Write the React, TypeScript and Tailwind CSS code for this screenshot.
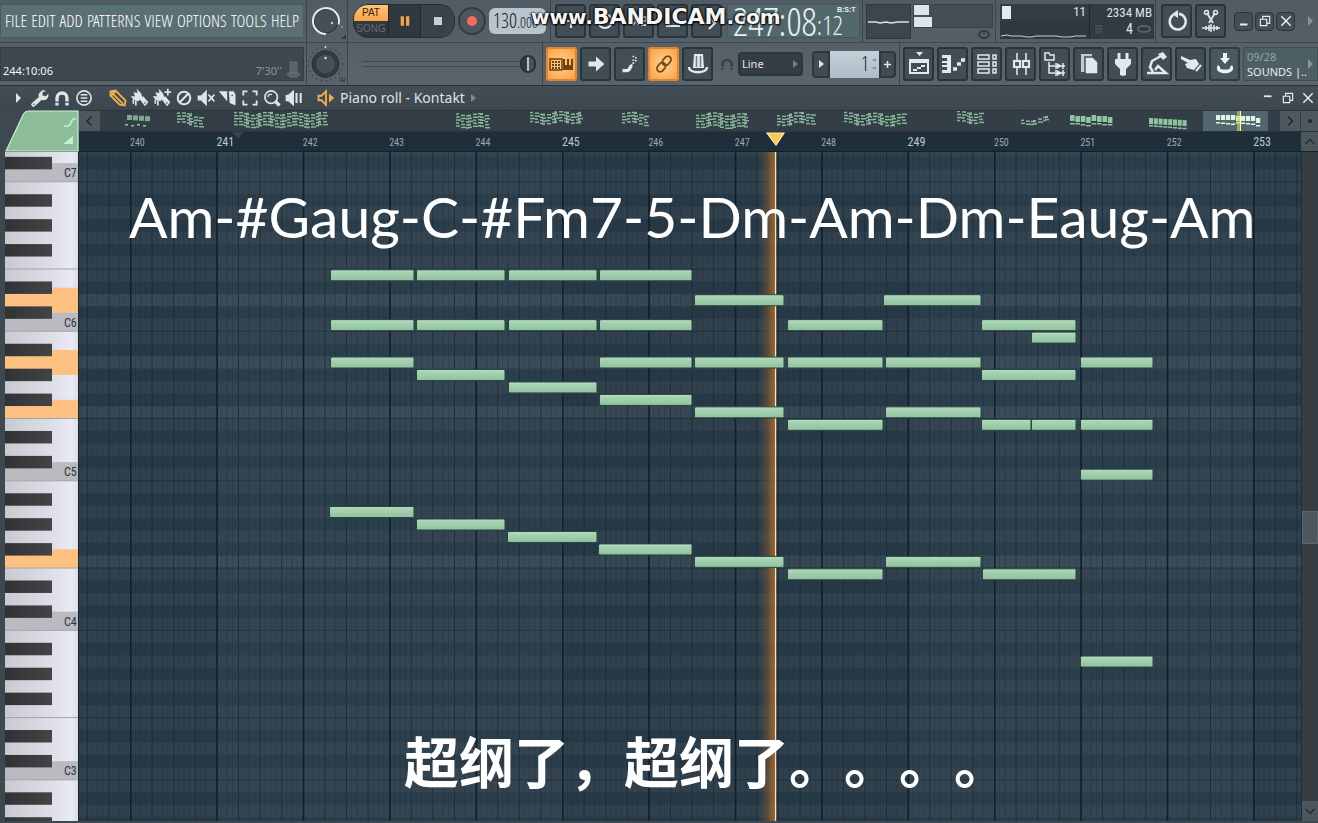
import type { ReactNode } from "react";

const ROW = 12.46;
const BAR = 86.4;
const BAR_START = 51;
const C6_BOTTOM = 179.3;

/* semitones are counted from C6 */
const rowTop = (semi: number) => C6_BOTTOM - (semi + 1) * ROW;
const pitchClass = (semi: number) => ((semi % 12) + 12) % 12;
const isBlack = (semi: number) => [1, 3, 6, 8, 10].includes(pitchClass(semi));

const SEMIS = Array.from({ length: 56 }, (_, i) => 14 - i);
const PLAYING = [2, -3, -7, -19];

// [x, width, semitone]
const NOTES: [number, number, number][] = [
  [252, 83, 4], [338, 88, 4], [430, 88, 4], [521, 92, 4],
  [616, 89, 2], [805, 97, 2],
  [252, 83, 0], [338, 88, 0], [430, 88, 0], [521, 92, 0], [709, 95, 0], [903, 94, 0],
  [953, 44, -1],
  [252, 83, -3], [521, 92, -3], [616, 89, -3], [709, 95, -3], [807, 95, -3], [1002, 72, -3],
  [338, 88, -4], [903, 94, -4],
  [430, 88, -5],
  [521, 92, -6],
  [616, 89, -7], [807, 95, -7],
  [709, 95, -8], [903, 49, -8], [953, 44, -8], [1002, 72, -8],
  [1002, 72, -12],
  [251, 84, -15], [338, 88, -16], [429, 89, -17], [520, 93, -18],
  [616, 89, -19], [807, 95, -19], [709, 95, -20], [904, 93, -20],
  [1002, 72, -27],
];

const BARS = Array.from({ length: 15 }, (_, i) => ({
  bar: 239 + i,
  x: BAR_START + (i - 1) * BAR,
}));

function Icon({ size = 24, children }: { size?: number; children: ReactNode }) {
  return (
    <svg
      width={size}
      height={size}
      viewBox="0 0 24 24"
      fill="none"
      stroke="currentColor"
      strokeWidth="2"
      aria-hidden="true"
      className="shrink-0"
    >
      {children}
    </svg>
  );
}

function ToolButton({
  label,
  active,
  teal,
  children,
}: {
  label: string;
  active?: boolean;
  teal?: boolean;
  children: ReactNode;
}) {
  const look = active
    ? "border-[#e8832c] bg-[radial-gradient(#ffd291,#f9a145)] text-[#70430b]"
    : teal
      ? "border-[#303b42] bg-[#48595f] text-[#eef3f4]"
      : "border-[#2c343b] bg-[#434d55] text-[#e3e8ea]";
  return (
    <button
      aria-label={label}
      className={`flex h-[34px] w-[31px] shrink-0 items-center justify-center rounded-[3px] border-2 ${look}`}
    >
      {children}
    </button>
  );
}

function Section({ className, children }: { className: string; children?: ReactNode }) {
  return (
    <div
      className={`flex h-full shrink-0 items-center border-r border-[#3b444c] ${className}`}
    >
      {children}
    </div>
  );
}

function Knob({ ring }: { ring?: boolean }) {
  return (
    <svg width="40" height="40" viewBox="0 0 40 40" fill="none" aria-hidden="true">
      {ring ? (
        <>
          <circle cx="19" cy="20" r="12" fill="#454f58" stroke="#2b3339" />
          <path d="M19 33A13 13 0 1 1 31.500 23.500" stroke="#e6eaec" strokeWidth="2" />
          <circle cx="25" cy="22" r="1.200" fill="#c4cbd0" />
          <circle cx="35" cy="26" r="1" fill="#9aa3a9" />
          <path d="M39 33v5h-5z" fill="#333c43" />
        </>
      ) : (
        <>
          <circle cx="18.500" cy="20" r="17" stroke="#3b444b" strokeWidth="1.500" strokeDasharray="1.500 3.500" />
          <circle cx="18.500" cy="20" r="13.500" fill="#343c43" stroke="#2a3238" />
          <circle cx="18.500" cy="20" r="10" fill="#454f58" stroke="#2e363d" />
          <circle cx="18.500" cy="14" r="1.200" fill="#dfe4e6" />
          <circle cx="18.500" cy="3" r="1" fill="#dfe4e6" />
          <path d="M33 33v4h5v-4M35.500 33v4" stroke="#343d44" />
        </>
      )}
    </svg>
  );
}

function WindowButtons({ small }: { small?: boolean }) {
  const box = small
    ? "flex h-[19px] w-[19px] items-center justify-center rounded-sm border border-[#2c343b] bg-[#434d55]"
    : "flex h-5 w-5 items-center justify-center";
  return (
    <div className={`flex text-[#e8ecee] ${small ? "gap-[2px]" : ""}`}>
      <button aria-label="Minimize" className={box}>
        <Icon size={14}>
          {small ? <path d="M5 18h13" strokeWidth="3.500" /> : <path d="M5 9h13" strokeWidth="3" />}
        </Icon>
      </button>
      <button aria-label="Restore" className={box}>
        <Icon size={14}>
          <path d="M4 9h11v11H4zM8 8V4h12v12h-4" />
        </Icon>
      </button>
      <button aria-label="Close" className={box}>
        <Icon size={14}>
          <path d="M4 4l16 16M20 4L4 20" strokeWidth="2.500" />
        </Icon>
      </button>
    </div>
  );
}

function Transport() {
  return (
    <div className="flex h-[34px] w-[102px] shrink-0 overflow-hidden rounded-[15px] border border-[#262e34] bg-[#2f383f]">
      <div className="flex w-[34px] flex-col font-['Liberation_Sans',sans-serif] text-[10px] leading-4">
        <button className="h-4 bg-[linear-gradient(#ffc377,#f9a44a)] text-[#33230f]">PAT</button>
        <button className="h-4 text-[#626b72]">SONG</button>
      </div>
      <button aria-label="Pause" className="flex w-[33px] items-center justify-center border-x border-[#1f262b] text-[#f5a04b]">
        <Icon size={16}>
          <path d="M8 5v14M16 5v14" strokeWidth="5" />
        </Icon>
      </button>
      <button aria-label="Stop" className="flex w-[33px] items-center justify-center bg-[#39434a] text-[#c9d0d4]">
        <Icon size={16}>
          <rect x="6" y="6" width="12" height="12" fill="currentColor" stroke="none" />
        </Icon>
      </button>
    </div>
  );
}

function TopRow() {
  return (
    <div className="flex h-[43px] items-center border-b border-[#3e474f]">
      <Section className="w-[307px]">
        <nav className="flex h-[34px] w-[304px] items-center justify-between border border-[#475a5e] bg-[#5b7075] px-1 font-['Open_Sans_Condensed_Light','Roboto_Condensed',sans-serif] text-[17px] text-white">
          {["FILE", "EDIT", "ADD", "PATTERNS", "VIEW", "OPTIONS", "TOOLS", "HELP"].map((item) => (
            <a key={item} href="#">
              {item}
            </a>
          ))}
        </nav>
      </Section>
      <Section className="w-[41px]">
        <Knob ring />
      </Section>
      <Section className="w-[203px] gap-[3px] pl-[5px]">
        <Transport />
        <button aria-label="Record" className="flex h-7 w-7 shrink-0 items-center justify-center rounded-full border-2 border-[#323b42] bg-[#4b555d]">
          <span className="h-[10px] w-[10px] rounded-full bg-[#f9695a]" />
        </button>
        <div className="h-[26px] w-[57px] shrink-0 rounded-md bg-[#b9c5cd] pl-1 font-['Open_Sans_Condensed_Light','Roboto_Condensed',sans-serif] text-[20px] leading-[26px] text-[#16202a]">
          130<span className="text-[15px]">.000</span>
        </div>
      </Section>
      <Section className="w-[312px] gap-[3px] pl-1">
        <ToolButton label="Metronome">
          <Icon>
            <path d="M12 5v14M8 12h8" />
          </Icon>
        </ToolButton>
        <ToolButton label="Wait for input">
          <Icon>
            <circle cx="12" cy="12" r="7" />
            <path d="M12 7v5l3 2" />
          </Icon>
        </ToolButton>
        <ToolButton label="Countdown">
          <Icon>
            <path d="M6 8l6 8M12 8l-6 8M15 8h4v4h-4v4h4" />
          </Icon>
        </ToolButton>
        <ToolButton label="Overdub">
          <Icon>
            <path d="M5 17h14M8 7v10" />
          </Icon>
        </ToolButton>
        <ToolButton label="Loop record">
          <Icon>
            <path d="M4 14h12M14 8l6 6-6 6" />
          </Icon>
        </ToolButton>
        <div className="ml-[2px] flex h-[34px] w-[133px] shrink-0 items-center border border-[#46585c] bg-[#53686c] pl-[5px] font-['Open_Sans_Condensed_Light','Roboto_Condensed',sans-serif] leading-none text-[#e4f1ef]">
          <span className="text-[38px]">247:08</span>
          <span className="pt-2 text-[26px]">:12</span>
          <span className="mt-[1px] -ml-[6px] self-start font-['Liberation_Sans',sans-serif] text-[7px] font-bold">B:S:T</span>
        </div>
      </Section>
      <Section className="w-[133px] gap-[2px] pl-[3px]">
        <svg width="45" height="35" className="shrink-0 border border-[#2f383f] bg-[#3c464e]" aria-hidden="true">
          <path d="M1 17h8l4 1 6-1 5 1 7-1h11" fill="none" stroke="#dde3e6" strokeWidth="1.500" />
        </svg>
        <div className="h-[35px] w-[80px] shrink-0">
          <div className="flex h-6 flex-col gap-[2px] border border-[#39424a] bg-[#444d55]">
            <span className="h-[10px] w-[15px] shrink-0 bg-[#e0e5e7]" />
            <span className="h-[10px] w-[18px] shrink-0 bg-[#e0e5e7]" />
          </div>
          <svg width="12" height="9" viewBox="0 0 12 9" className="mt-[2px] mr-[3px] ml-auto" aria-hidden="true">
            <ellipse cx="6" cy="4.500" rx="5" ry="3.500" fill="none" stroke="#343c43" strokeWidth="2" />
            <path d="M6 2v3" stroke="#343c43" />
          </svg>
        </div>
      </Section>
      <Section className="w-[160px] pl-[4px] font-['Roboto_Condensed',sans-serif] text-[13px] text-[#dfe5e8]">
        <div className="flex h-[35px] w-[89px] flex-col bg-[#2f383f]">
          <div className="flex h-[17px] items-center justify-between bg-[#343d44] pr-[3px] pl-[2px]">
            <span className="h-[13px] w-[9px] bg-[#e5e9ea]" />
            <span>11</span>
          </div>
          <svg width="89" height="18" aria-hidden="true">
            <path d="M1 15l6-1 4 1h10l6 1h5l4-1h20l6 1h8l5-1h11" fill="none" stroke="#c9d0d3" />
          </svg>
        </div>
        <div className="flex h-[35px] w-[65px] flex-col items-end border-l border-[#20272c] bg-[#323b42] pr-[2px] leading-[17px]">
          <span>2334 MB</span>
          <span className="flex w-full items-center justify-between pl-1 text-[14px]">
            <svg width="9" height="10" aria-hidden="true">
              <path d="M1 2h7M1 5h7M1 8h7" stroke="#59636a" />
            </svg>
            <span className="flex items-center gap-1 pl-5">
              4
              <svg width="15" height="9" aria-hidden="true">
                <ellipse cx="7" cy="4" rx="6" ry="3" fill="none" stroke="#59636a" strokeWidth="2" />
              </svg>
            </span>
          </span>
        </div>
      </Section>
      <div className="flex min-w-0 flex-1 items-center pl-[5px]">
        <div className="flex gap-[3px]">
          <ToolButton label="Undo">
            <Icon>
              <path d="M8.500 5.800A8 8 0 1 0 14 4.700" strokeWidth="2.500" />
              <path d="M13 1v8L7 5z" fill="currentColor" stroke="none" />
            </Icon>
          </ToolButton>
          <ToolButton label="Cut">
            <Icon>
              <path d="M8 4l6 10M16 4l-6 10" strokeWidth="1.800" />
              <circle cx="7.500" cy="3.500" r="2" strokeWidth="1.500" />
              <circle cx="16.500" cy="3.500" r="2" strokeWidth="1.500" />
              <path d="M3 19h18M7 17v4M10 16v6M12 15v8M15 16v6M18 17v4" strokeWidth="1.500" />
            </Icon>
          </ToolButton>
        </div>
        <div className="ml-2">
          <WindowButtons small />
        </div>
        <svg width="7" height="10" className="mr-1 ml-auto" aria-hidden="true">
          <path d="M1 0l5 5-5 5z" fill="#87919a" />
        </svg>
      </div>
    </div>
  );
}

function SecondRow() {
  return (
    <div className="flex h-[42px] items-center">
      <Section className="w-[307px]">
        <div className="flex h-[34px] w-[304px] items-end border border-[#353e45] bg-[#3e474f] px-[2px] pb-px font-['Noto_Sans',sans-serif] text-[11px] leading-4 text-[#f0f3f4]">
          <span>244:10:06</span>
          <span className="ml-auto text-[#89939a]">7'30''</span>
          <svg width="15" height="18" viewBox="0 0 15 18" className="ml-1 shrink-0" aria-hidden="true">
            <path d="M4 1h7v11H4zM1 13l3 3h7l3-3-2-1H3z" fill="#59636a" stroke="#646e75" />
          </svg>
        </div>
      </Section>
      <Section className="w-[41px]">
        <Knob />
      </Section>
      <Section className="w-[195px] px-[6px]">
        <input
          type="range"
          aria-label="Song position"
          defaultValue={100}
          className="ml-2 h-5 w-full appearance-none bg-[linear-gradient(transparent_7px,#3f4850_7px,#3f4850_8px,#59646d_8px,#59646d_12px,#3f4850_12px,#3f4850_13px,transparent_13px)] [&::-webkit-slider-thumb]:h-[18px] [&::-webkit-slider-thumb]:w-4 [&::-webkit-slider-thumb]:appearance-none [&::-webkit-slider-thumb]:rounded-full [&::-webkit-slider-thumb]:border-2 [&::-webkit-slider-thumb]:border-[#2b3238] [&::-webkit-slider-thumb]:bg-[linear-gradient(90deg,#343c43_42%,#c9beb0_42%,#c9beb0_58%,#4a535b_58%)]"
        />
      </Section>
      <Section className="w-[357px] gap-[3px] pl-[3px]">
        <ToolButton label="Typing keyboard to piano" active>
          <svg width="25" height="14" viewBox="0 0 25 14" className="shrink-0" aria-hidden="true">
            <path d="M1 2h12v11H1z" fill="none" stroke="currentColor" strokeWidth="1.500" />
            <path d="M3 5h9M3 8h9M3 11h9" stroke="currentColor" strokeWidth="2" strokeDasharray="2 1" />
            <path d="M14 2h2v6h2V2h2v6h2V2h2v11H14z" fill="currentColor" />
          </svg>
        </ToolButton>
        <ToolButton label="Step edit">
          <Icon size={20}>
            <path d="M3 9h9V3l10 9-10 9v-6H3z" fill="currentColor" stroke="none" />
          </Icon>
        </ToolButton>
        <ToolButton label="Note slide">
          <Icon size={20}>
            <path d="M3 20h5c5 0 3-6 7-6" strokeWidth="4" />
            <path d="M16 12V6M19 9V3M16 4V2" strokeDasharray="2 1.500" />
          </Icon>
        </ToolButton>
        <ToolButton label="Multilink" active>
          <Icon size={20}>
            <g transform="rotate(-50 12 12)">
              <rect x="1" y="8" width="12" height="8" rx="4" />
              <rect x="11" y="8" width="12" height="8" rx="4" />
            </g>
          </Icon>
        </ToolButton>
        <ToolButton label="Magic hat">
          <Icon>
            <path d="M8 2h9l1 14H7z" fill="currentColor" stroke="none" />
            <path d="M10.500 4v11M14.500 4v11" stroke="#717c96" strokeWidth="1.500" />
            <path d="M3 15c0 7 18 7 18 0" strokeWidth="2.500" />
          </Icon>
        </ToolButton>
        <span className="ml-[3px] text-[#38424a]">
          <Icon size={16}>
            <path d="M5 21v-8a7 7 0 0 1 14 0v8" strokeWidth="4" />
            <path d="M3 17h5M16 17h5" stroke="#56616a" />
          </Icon>
        </span>
        <label className="relative flex shrink-0 items-center">
          <span className="sr-only">Snap</span>
          <select className="h-[24px] w-[65px] appearance-none rounded-sm border-2 border-[#2e363d] bg-[#353d43] pl-[2px] font-['Noto_Sans',sans-serif] text-[11px] text-[#e3e7ea]">
            <option>Line</option>
          </select>
          <svg width="5" height="8" className="absolute right-[5px]" aria-hidden="true">
            <path d="M0 0l5 4-5 4z" fill="#727c84" />
          </svg>
        </label>
        <div className="ml-[6px] flex h-[27px] shrink-0 items-stretch">
          <button aria-label="Pattern menu" className="flex w-[18px] items-center justify-center rounded-l-sm border-2 border-[#2f373e] bg-[#414b52]">
            <svg width="5" height="8" aria-hidden="true">
              <path d="M0 0l5 4-5 4z" fill="#dfe4e7" />
            </svg>
          </button>
          <div className="flex w-[49px] items-center justify-end gap-[3px] bg-[linear-gradient(#c4d1d9,#aebcc5)] pr-[2px] font-['Open_Sans_Condensed_Light','Roboto_Condensed',sans-serif] text-[20px] leading-6 text-[#16202a]">
            1
            <svg width="5" height="14" aria-hidden="true">
              <path d="M0 4l2.500-3L5 4zM0 10l2.500 3L5 10z" fill="#87949d" />
            </svg>
          </div>
          <button aria-label="Add pattern" className="flex w-[17px] items-center justify-center rounded-r-sm border-2 border-[#2f373e] bg-[#414b52] text-[#e3e8ea]">
            <svg width="9" height="9" aria-hidden="true">
              <path d="M4.500 1v7M1 4.500h7" stroke="currentColor" strokeWidth="1.500" />
            </svg>
          </button>
        </div>
      </Section>
      <div className="flex min-w-0 flex-1 items-center gap-[3px] pl-[3px]">
        <ToolButton label="Playlist">
          <Icon>
            <path d="M9 0h7l-3.500 4z" fill="currentColor" stroke="none" />
            <path d="M3 8h18v13H3z" />
            <path d="M3 8h18v3H3z" fill="currentColor" stroke="none" />
            <path d="M6 18h4M10 16h4M14 14h4" />
          </Icon>
        </ToolButton>
        <ToolButton label="Piano roll">
          <Icon>
            <path d="M1 3h9v18H1v-3h5v-3H1v-2h5v-2H1V9h5V6H1z" fill="currentColor" stroke="none" />
            <path d="M12 17h4M16 12h4M20 8h4" strokeWidth="3.500" />
          </Icon>
        </ToolButton>
        <ToolButton label="Channel rack">
          <Icon>
            <path d="M3 3h11v4H3zM3 10h11v4H3zM3 17h11v4H3zM18 3h3v4h-3zM18 10h3v4h-3zM18 17h3v4h-3z" strokeWidth="1.500" />
          </Icon>
        </ToolButton>
        <ToolButton label="Mixer">
          <Icon>
            <path d="M8 1v8M8 15v8M17 1v8M17 15v8" strokeWidth="1.500" />
            <rect x="5" y="9" width="6" height="6" strokeWidth="2.200" />
            <rect x="14" y="9" width="6" height="6" strokeWidth="2.200" />
          </Icon>
        </ToolButton>
        <ToolButton label="Browser">
          <Icon>
            <path d="M2 1h4l1 2h4v5H2zM6 10v11h6M6 14h6" strokeWidth="1.500" />
            <path d="M13 11v6M13 18v6M13 14h9M13 21h9M20 11v6M20 18v6" strokeWidth="1.500" />
            <path d="M14 11l5 3-5 3zM14 18l5 3-5 3z" fill="currentColor" stroke="none" />
          </Icon>
        </ToolButton>
        <ToolButton label="Project files">
          <Icon>
            <path d="M4 2h11v18H4z" fill="currentColor" stroke="none" opacity=".8" />
            <path d="M8 5h8l5 5v12H8z" fill="currentColor" stroke="#434d55" strokeWidth="1.500" />
          </Icon>
        </ToolButton>
        <ToolButton label="Plugins">
          <Icon>
            <path d="M8 1v6M16 1v6" strokeWidth="3" />
            <path d="M4 7h16v5l-5 5v6l-3 1-3-1v-6l-5-5z" fill="currentColor" stroke="none" />
          </Icon>
        </ToolButton>
        <ToolButton label="Tempo tapper">
          <Icon>
            <path d="M13 2l5-2 4 5-4 3z" fill="currentColor" stroke="none" />
            <path d="M16 4L7 9l-2 6 3 5" strokeWidth="2.500" />
            <path d="M2 21h19l-8-7-3 4" strokeWidth="2.500" />
          </Icon>
        </ToolButton>
        <ToolButton label="Touch controller">
          <Icon>
            <path d="M2 4l9 4 6-1 3 5-5 6-7-2-2-4 3-1-7-4z" fill="currentColor" stroke="none" />
            <path d="M17 19l5-6" />
          </Icon>
        </ToolButton>
        <ToolButton label="Download" teal>
          <Icon>
            <path d="M12 1v6" strokeWidth="4" />
            <path d="M7 6h10l-5 6z" fill="currentColor" stroke="none" />
            <path d="M5 13c-7 11 21 11 14 0l-4 4H9z" fill="currentColor" stroke="none" />
            <ellipse cx="12" cy="16" rx="5" ry="1.500" fill="#48595f" stroke="none" />
          </Icon>
        </ToolButton>
        <div className="flex h-[34px] min-w-0 flex-1 items-center justify-between border border-[#3f5054] bg-[#4d5f64] pr-1 pl-[3px] font-['Noto_Sans',sans-serif] text-[11px] leading-[15px]">
          <div className="whitespace-nowrap">
            <div className="text-[#93a4a9]">09/28</div>
            <div className="text-[#e5edee]">SOUNDS |..</div>
          </div>
          <svg width="5" height="10" className="shrink-0" aria-hidden="true">
            <path d="M0 0l5 5-5 5z" fill="#87959b" />
          </svg>
        </div>
      </div>
    </div>
  );
}

function PianoRollTitle() {
  return (
    <div className="flex h-6 items-center bg-[linear-gradient(#444e57,#3c464f)] pl-4 text-[#dfe4e6]">
      <svg width="6" height="10" aria-hidden="true">
        <path d="M0 0l5 5-5 5z" fill="currentColor" />
      </svg>
      <div className="ml-2 flex gap-[2px]">
        <button aria-label="Tools">
          <Icon size={20}>
            <path d="M4 20l9-8" strokeWidth="5" strokeLinecap="round" />
            <path d="M19 4l-4 1v4l4 1 3-3c1 6-4 9-8 7s-5-6-2-9 5-3 7-1z" fill="currentColor" stroke="none" />
            <circle cx="4.500" cy="19.500" r="1" fill="#414b54" stroke="none" />
          </Icon>
        </button>
        <button aria-label="Snap to grid">
          <Icon size={20}>
            <path d="M6 21v-9a6 6 0 0 1 12 0v9" strokeWidth="4" />
            <path d="M3 17h6M15 17h6" stroke="#414b54" strokeWidth="1.500" />
          </Icon>
        </button>
        <button aria-label="Stamp">
          <Icon size={20}>
            <circle cx="12" cy="12" r="8.500" />
            <path d="M8 8h8M8 12h8M8 16h8" strokeWidth="1.800" />
          </Icon>
        </button>
      </div>
      <div className="ml-[14px] flex gap-[2px]">
        <button aria-label="Draw" className="text-[#f3ac4a]">
          <Icon size={20}>
            <path d="M3 4l6-1 12 12-1 6-6-1L3 9zM4 5l14 14M9 4L4 9" strokeWidth="2.200" />
          </Icon>
        </button>
        <button aria-label="Paint">
          <Icon size={20}>
            <path d="M8 1l5 5 2 5-5 5-6-2-3-4 5 0-2-5 5 1zM12 14l4-4 6 7-4 5z" fill="currentColor" stroke="none" />
            <path d="M4 14v5M7 15v6" />
            <circle cx="18" cy="18" r="1" fill="#414b54" stroke="none" />
          </Icon>
        </button>
        <button aria-label="Paint drum sequence">
          <Icon size={20}>
            <path d="M8 1l5 5 2 5-5 5-6-2-3-4 5 0-2-5 5 1zM12 14l4-4 6 7-4 5z" fill="currentColor" stroke="none" />
            <path d="M4 14v5M7 15v6M19 1v8M15 5h8" />
            <circle cx="18" cy="18" r="1" fill="#414b54" stroke="none" />
          </Icon>
        </button>
        <button aria-label="Delete">
          <Icon size={20}>
            <circle cx="12" cy="12" r="7.500" strokeWidth="2.500" />
            <path d="M7 17L17 7" strokeWidth="2.500" />
          </Icon>
        </button>
        <button aria-label="Mute">
          <Icon size={20}>
            <path d="M2 9h4l7-7v20l-7-7H2z" fill="currentColor" stroke="none" />
            <path d="M15 8l7 8M22 8l-7 8" />
          </Icon>
        </button>
        <button aria-label="Slice">
          <Icon size={20}>
            <path d="M1 4h10v12zM13 4h6l2 4v13l-7-3z" fill="currentColor" stroke="none" />
            <circle cx="17" cy="9" r="1" fill="#414b54" stroke="none" />
          </Icon>
        </button>
        <button aria-label="Select">
          <Icon size={20}>
            <path d="M4 9V4h5M15 4h5v5M20 15v5h-5M9 20H4v-5" strokeWidth="2.200" />
          </Icon>
        </button>
        <button aria-label="Zoom">
          <Icon size={20}>
            <circle cx="11" cy="11" r="7.500" />
            <path d="M7 11c0-3 3-4 5-3" strokeWidth="1.500" />
            <path d="M16 16l5 5" strokeWidth="4" />
          </Icon>
        </button>
        <button aria-label="Playback">
          <Icon size={20}>
            <path d="M2 8h3l7-6v20l-7-6H2z" fill="currentColor" stroke="none" />
            <path d="M15 6v12M20 6v12" strokeWidth="2.500" />
          </Icon>
        </button>
      </div>
      <span className="ml-[13px] text-[#f3ac4a]">
        <Icon size={18}>
          <path d="M2 9h4l6-6v18l-6-6H2z" strokeWidth="2.500" />
          <path d="M16 6l7 6-7 6z" fill="currentColor" stroke="none" />
        </Icon>
      </span>
      <h1 className="ml-[5px] font-['Noto_Sans',sans-serif] text-[14px] leading-5">Piano roll - Kontakt</h1>
      <svg width="5" height="8" className="ml-[6px]" aria-hidden="true">
        <path d="M0 0l5 4-5 4z" fill="#7b858c" />
      </svg>
      <div className="ml-auto">
        <WindowButtons />
      </div>
    </div>
  );
}

// [x, width, y, rows, slope]
const CLUSTERS: [number, number, number, number, number][] = [
  [98, 24, 3, 4, 0.8],
  [155, 92, 3, 5, 0],
  [377, 34, 3, 5, 0.4],
  [451, 52, 3, 4, -0.2],
  [543, 24, 2, 4, 0.8],
  [617, 52, 3, 5, 0.2],
  [698, 38, 4, 4, -0.3],
  [765, 62, 3, 4, 0.2],
  [878, 27, 2, 4, 0],
  [942, 28, 10, 2, -0.8],
];

function MiniNotes() {
  return (
    <svg width="100%" height="20" className="block" aria-hidden="true">
      <g stroke="#8fc4a0" strokeWidth="1.500" opacity=".9">
        {CLUSTERS.map(([x, w, y, rows, slope]) =>
          Array.from({ length: Math.floor(w / 4) }, (_, c) =>
            Array.from({ length: rows }, (_, r) => {
              const nx = x + c * 4 + ((r * 3 + c) % 3);
              const ny = y + r * 3 + slope * c * 0.6 + Math.sin(c * 0.9 + x) * 1.5;
              return <path key={`${x}-${c}-${r}`} d={`M${nx} ${ny}h${3 + ((c + r) % 3)}`} />;
            }),
          ),
        )}
      </g>
      <g fill="#8fc4a0">
        {[0, 1, 2, 3].map((i) => (
          <g key={i}>
            <rect x={48 + i * 6} y={4 + i * 0.4} width="5" height="5" opacity=".8" />
            <rect x={46 + i * 6} y={13 + (i % 2)} width="3" height="1.500" />
          </g>
        ))}
        {[0, 1, 2, 3, 4, 5, 6, 7].map((i) => (
          <g key={i}>
            <rect x={991 + i * 5.4} y={[4, 5, 5, 6, 4, 5, 5, 6][i]} width="4.600" height="6" />
            <rect x={991 + i * 5.4} y={[12, 12, 13, 14, 12, 12, 13, 13][i]} width="4.600" height="1.500" />
            <rect x={1070 + i * 4.8} y={7 + i * 0.3} width="4" height="6" />
            <rect x={1070 + i * 4.8} y={14 + i * 0.4} width="4" height="1.500" />
          </g>
        ))}
      </g>
      <rect x="1124" width="65" height="20" fill="#53666e" />
      <g fill="#dff3e6">
        {[0, 1, 2, 3, 4, 5, 6, 7, 8].map((i) => (
          <g key={i}>
            <rect x={1137 + i * 5} y={4 + (i > 3 ? 1 : 0) + (i > 7 ? 2 : 0)} width="4.200" height="5" />
            <rect x={1137 + i * 5} y={11 + (i % 4) * 0.5 + (i > 7 ? 3 : 0)} width="4.200" height="1.500" />
          </g>
        ))}
      </g>
      <rect x="1158" width="4" height="20" fill="#c3d84a" opacity=".6" />
      <rect x="1161" width="1" height="20" fill="#f6ff9a" />
    </svg>
  );
}

function Overview() {
  return (
    <div className="flex h-[22px] border-y border-[#2b343b] bg-[#343e46] text-[#1f272d]">
      <div className="relative min-w-0 flex-1">
        <MiniNotes />
        <button aria-label="Scroll left" className="absolute top-0 left-0 flex h-5 w-[21px] items-center justify-center bg-[#4e5860]">
          <Icon size={12}>
            <path d="M15 3l-9 9 9 9" strokeWidth="3" />
          </Icon>
        </button>
      </div>
      <button aria-label="Scroll right" className="flex w-5 items-center justify-center bg-[#4e5860]">
        <Icon size={12}>
          <path d="M8 3l9 9-9 9" strokeWidth="3" />
        </Icon>
      </button>
      <button aria-label="Zoom" className="ml-px flex w-[17px] items-center justify-center bg-[#4e5860]">
        <span className="h-1 w-1 rounded-full bg-[#1f272d]" />
      </button>
    </div>
  );
}

function Ruler() {
  return (
    <div className="flex h-5 border-b border-[#15222b] bg-[#1f2f3a]">
      <svg height="19" className="min-w-0 flex-1 font-['Roboto_Condensed',sans-serif]">
        <path d="M153 0h12l-6 7z" fill="#34434d" />
        {BARS.slice(1).map(({ bar, x }) => (
          <text key={bar} x={x} y="14" fontSize={bar % 4 === 1 ? 12 : 10} fill={bar % 4 === 1 ? "#bcc6cb" : "#9ba7af"}>
            {bar}
          </text>
        ))}
        <path d="M688 1h17l-8 12z" fill="#ffc64b" stroke="#fff1bd" strokeWidth="1.200" />
      </svg>
      <button aria-label="Scroll up" className="flex w-[17px] items-center justify-center bg-[#4c565d] text-[#242d33]">
        <Icon size={12}>
          <path d="M3 16l9-9 9 9" strokeWidth="3" />
        </Icon>
      </button>
    </div>
  );
}

function Keyboard() {
  return (
    <svg width="74" height="100%" className="block bg-[#dcdce6]" aria-hidden="true">
      <defs>
        <linearGradient id="white-key" x1="0" x2="1">
          <stop offset="0" stopColor="#c9cad1" />
          <stop offset=".6" stopColor="#dcdde6" />
          <stop offset=".9" stopColor="#e9eaf5" />
          <stop offset="1" stopColor="#d9dae2" />
        </linearGradient>
        <linearGradient id="black-key" x1="0" x2="1">
          <stop offset="0" stopColor="#303234" />
          <stop offset="1" stopColor="#424446" />
        </linearGradient>
      </defs>
      <rect width="74" height="100%" fill="url(#white-key)" />
      {SEMIS.filter((s) => !isBlack(s)).map((s) => {
        const fill = PLAYING.includes(s) ? "#fcc180" : pitchClass(s) === 0 ? "#b9bbc0" : null;
        const above = isBlack(s + 1) ? ROW / 2 : 0;
        const below = isBlack(s - 1) ? ROW / 2 : 0;
        return (
          <g key={s}>
            {fill && <rect y={rowTop(s) - above} width="73" height={ROW + above + below} fill={fill} />}
            {!below && <path d={`M0 ${rowTop(s) + ROW}h73`} stroke="#a3a5ab" />}
            {pitchClass(s) === 0 && (
              <text x="59" y={rowTop(s) + 8} fontSize="12" fill="#33363a" className="font-['Roboto_Condensed',sans-serif]">
                {`C${6 + s / 12}`}
              </text>
            )}
          </g>
        );
      })}
      {SEMIS.filter(isBlack).map((s) => (
        <rect key={s} y={rowTop(s)} width="47" height={ROW} fill="url(#black-key)" />
      ))}
      <path d="M73.500 0v2000" stroke="#1a242b" />
    </svg>
  );
}

function NoteGrid() {
  return (
    <svg width="100%" height="100%" className="block" aria-hidden="true">
      <defs>
        <linearGradient id="note" x1="0" x2="0" y1="0" y2="1">
          <stop offset="0" stopColor="#b8e0c2" />
          <stop offset=".25" stopColor="#a6d3b2" />
          <stop offset="1" stopColor="#92c1a0" />
        </linearGradient>
        <linearGradient id="playhead" x1="0" x2="1">
          <stop offset="0" stopColor="#a5672a" stopOpacity="0" />
          <stop offset=".5" stopColor="#a5672a" stopOpacity=".35" />
          <stop offset="1" stopColor="#a86d30" stopOpacity=".9" />
        </linearGradient>
        <pattern id="steps" x={BAR_START} width={BAR / 4} height="8" patternUnits="userSpaceOnUse">
          <path d="M5.400 0v8M16.200 0v8" stroke="#1e303c" strokeOpacity=".3" />
          <path d="M10.800 0v8" stroke="#1e303c" strokeOpacity=".6" />
          <path d="M.500 0v8" stroke="#182935" strokeOpacity=".8" />
        </pattern>
      </defs>
      <rect width="100%" height="100%" fill="#30414d" />
      {SEMIS.map((s) => (
        <g key={s}>
          {isBlack(s) && <rect y={rowTop(s)} width="100%" height={ROW} fill="#273946" />}
          {PLAYING.includes(s) && <rect y={rowTop(s)} width="100%" height={ROW} fill="#364853" />}
          {(pitchClass(s) === 0 || pitchClass(s) === 5) && (
            <rect y={rowTop(s) + ROW - 0.5} width="100%" height="1" fill="#1f313d" />
          )}
        </g>
      ))}
      {BARS.filter(({ bar }) => bar % 8 === 1).map(({ bar, x }) => (
        <rect key={bar} x={x} width={BAR * 4} height="100%" fill="#6b7f8c" opacity=".08" />
      ))}
      <rect width="100%" height="100%" fill="url(#steps)" />
      {BARS.map(({ bar, x }) => (
        <rect key={bar} x={x} width="1.500" height="100%" fill="#10202b" />
      ))}
      <rect x="680" width="16" height="100%" fill="url(#playhead)" />
      <rect x="696" width="1.200" height="100%" fill="#ffe2b0" />
      {NOTES.map(([x, w, s]) => (
        <rect key={`${x}-${s}`} x={x - 0.5} y={rowTop(s) + 0.8} width={w + 0.5} height="11" rx="1.500" fill="url(#note)" stroke="#27463f" />
      ))}
    </svg>
  );
}

export default function App() {
  return (
    <div className="flex h-screen w-full flex-col overflow-hidden bg-[#3d4851]">
      <header className="relative shrink-0 bg-[linear-gradient(#505b64,#59646d)]">
        <TopRow />
        <SecondRow />
        <div className="pointer-events-none absolute top-[3px] left-[531px] flex items-baseline font-['DejaVu_Sans',sans-serif] leading-7 font-bold text-[#f5f5f5] [text-shadow:0_0_2px_#000,1px_1px_2px_#000,-1px_0_2px_#000]">
          <span className="text-[20px]">www.</span>
          <span className="text-[22px]">BANDICAM</span>
          <span className="text-[20px]">.com</span>
        </div>
      </header>

      <main className="flex min-h-0 flex-1 flex-col border-t border-[#2a3239] pb-[2px]">
        <PianoRollTitle />

        <div className="flex shrink-0">
          <div className="w-[79px] shrink-0 pl-[5px]">
            <svg width="74" height="42" aria-hidden="true" className="block">
              <path d="M1 41L18 5q2-4 6-4h49v40z" fill="#8dbd98" stroke="#c8efce" strokeWidth="1.200" />
              <path d="M59 16h4c4 0 2-7 6-7h2" fill="none" stroke="#c8efce" strokeWidth="1.500" />
              <path d="M68 26v8h-10z" fill="#c8efce" />
            </svg>
          </div>
          <div className="min-w-0 flex-1">
            <Overview />
            <Ruler />
          </div>
        </div>

        <div className="relative flex min-h-0 flex-1 overflow-hidden">
          <div className="w-[79px] shrink-0 overflow-hidden pl-[5px]">
            <Keyboard />
          </div>
          <div className="min-w-0 flex-1 overflow-hidden">
            <NoteGrid />
          </div>
          <div className="flex w-[17px] shrink-0 flex-col border-l border-[#1f2d37] bg-[#363e43]">
            <div className="flex-1" />
            <div className="h-[33px] border border-[#5d676e] bg-[#4d575e]" />
            <div className="h-[257px]" />
            <button aria-label="Scroll down" className="flex h-5 items-center justify-center bg-[#4c565d] text-[#242d33]">
              <Icon size={12}>
                <path d="M3 8l9 9 9-9" strokeWidth="3" />
              </Icon>
            </button>
          </div>

          <p className="absolute top-6 left-[129px] font-['Lato',sans-serif] text-[57px] leading-[80px] whitespace-nowrap text-white">
            Am-#Gaug-C-#Fm7-5-Dm-Am-Dm-Eaug-Am
          </p>
          <p
            lang="zh-CN"
            className="absolute bottom-[22px] left-[404px] font-['Noto_Sans_CJK_SC',sans-serif] text-[55px] leading-[80px] font-bold whitespace-nowrap text-white [text-spacing-trim:space-all]"
          >
            超纲了，超纲了。。。。
          </p>
        </div>
      </main>
    </div>
  );
}
